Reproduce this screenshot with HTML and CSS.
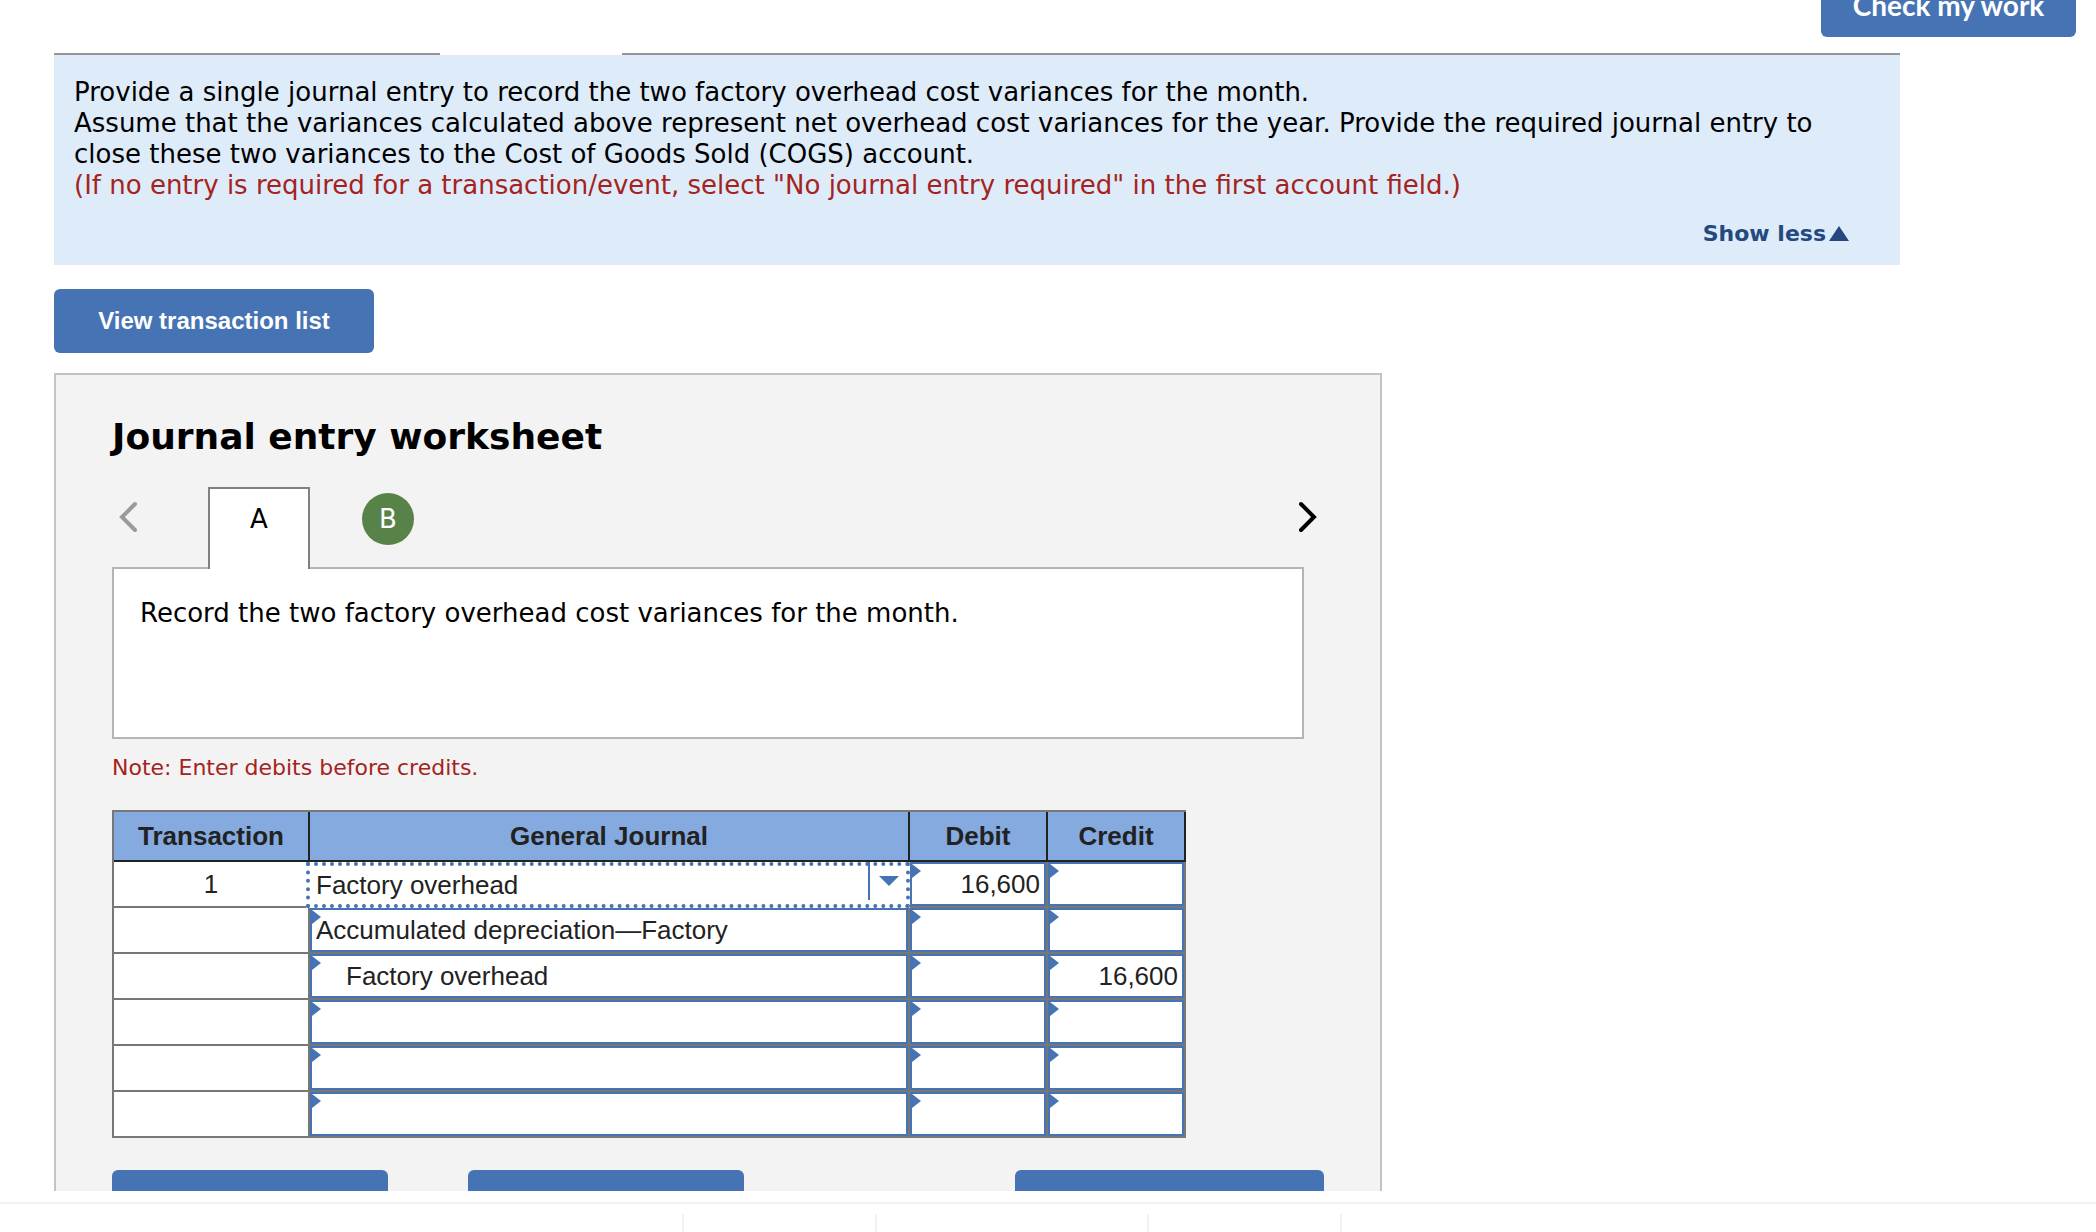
FILE: index.html
```html
<!DOCTYPE html>
<html lang="en">
<head>
<meta charset="utf-8">
<title>Journal entry worksheet</title>
<link rel="stylesheet" href="styles.css">
</head>
<body>
<main class="content">
  <div class="toolbar"><button type="button" class="btn btn-check">Check my work</button></div>

  <div class="tab-rule"><span></span><span></span></div>
  <section class="instructions">
    <p>Provide a single journal entry to record the two factory overhead cost variances for the month.<br>
    Assume that the variances calculated above represent net overhead cost variances for the year. Provide the required journal entry to close these two variances to the Cost of Goods Sold (COGS) account.<br>
    <span class="hint">(If no entry is required for a transaction/event, select "No journal entry required" in the first account field.)</span></p>
    <a class="show-less" href="#">Show less<svg width="20" height="15" viewBox="0 0 20 15" aria-hidden="true"><path d="M10 0L20 15H0z" fill="currentColor"/></svg></a>
  </section>

  <button type="button" class="btn btn-list">View transaction list</button>

  <section class="worksheet">
    <h1>Journal entry worksheet</h1>
    <nav class="steps">
      <button type="button" class="arrow arrow-prev" aria-label="Previous"><svg width="18" height="32" viewBox="0 0 18 32" aria-hidden="true"><path d="M16 3L3 16L16 29" fill="none" stroke="currentColor" stroke-width="4" stroke-linecap="round"/></svg></button>
      <button type="button" class="step step-current">A</button>
      <button type="button" class="step step-done">B</button>
      <button type="button" class="arrow arrow-next" aria-label="Next"><svg width="18" height="32" viewBox="0 0 18 32" aria-hidden="true"><path d="M2 3L15 16L2 29" fill="none" stroke="currentColor" stroke-width="4" stroke-linecap="round"/></svg></button>
    </nav>
    <div class="description">Record the two factory overhead cost variances for the month.</div>
    <p class="note">Note: Enter debits before credits.</p>

    <table class="journal">
      <colgroup><col class="col-transaction"><col class="col-account"><col class="col-amount"><col class="col-amount"></colgroup>
      <thead>
        <tr><th scope="col">Transaction</th><th scope="col">General Journal</th><th scope="col">Debit</th><th scope="col">Credit</th></tr>
      </thead>
      <tbody>
        <tr>
          <td>1</td>
          <td class="entry"><div class="picker"><select aria-label="Account, line 1"><option>Factory overhead</option></select><span class="picker-arrow"></span></div></td>
          <td class="entry amount"><input type="text" aria-label="Debit, line 1" value="16,600"></td>
          <td class="entry amount"><input type="text" aria-label="Credit, line 1"></td>
        </tr>
        <tr>
          <td></td>
          <td class="entry"><input type="text" aria-label="Account, line 2" value="Accumulated depreciation—Factory"></td>
          <td class="entry amount"><input type="text" aria-label="Debit, line 2"></td>
          <td class="entry amount"><input type="text" aria-label="Credit, line 2"></td>
        </tr>
        <tr>
          <td></td>
          <td class="entry"><input type="text" class="indented" aria-label="Account, line 3" value="Factory overhead"></td>
          <td class="entry amount"><input type="text" aria-label="Debit, line 3"></td>
          <td class="entry amount"><input type="text" aria-label="Credit, line 3" value="16,600"></td>
        </tr>
        <tr>
          <td></td>
          <td class="entry"><input type="text" aria-label="Account, line 4"></td>
          <td class="entry amount"><input type="text" aria-label="Debit, line 4"></td>
          <td class="entry amount"><input type="text" aria-label="Credit, line 4"></td>
        </tr>
        <tr>
          <td></td>
          <td class="entry"><input type="text" aria-label="Account, line 5"></td>
          <td class="entry amount"><input type="text" aria-label="Debit, line 5"></td>
          <td class="entry amount"><input type="text" aria-label="Credit, line 5"></td>
        </tr>
        <tr>
          <td></td>
          <td class="entry"><input type="text" aria-label="Account, line 6"></td>
          <td class="entry amount"><input type="text" aria-label="Debit, line 6"></td>
          <td class="entry amount"><input type="text" aria-label="Credit, line 6"></td>
        </tr>
      </tbody>
    </table>

    <div class="actions">
      <button type="button" class="btn btn-record" aria-label="Record entry"></button>
      <button type="button" class="btn btn-clear" aria-label="Clear entry"></button>
      <button type="button" class="btn btn-view" aria-label="View general journal"></button>
    </div>
  </section>
</main>
<footer class="pager"><div></div><div></div><div></div><div></div><div></div></footer>
</body>
</html>
```
FILE: styles.css
```css
* { box-sizing: border-box; }

body {
  margin: 0;
  height: 100vh;
  display: flex;
  flex-direction: column;
  overflow: hidden;
  background: #fff;
  color: #000;
  font: 26px/31px Verdana, "DejaVu Sans", sans-serif;
}

p, h1 { margin: 0; }
button, input, select { font: inherit; color: inherit; margin: 0; }

.content {
  flex: 1;
  min-height: 0;
  overflow: hidden;
  padding: 0 196px 0 54px;
}

.btn {
  height: 64px;
  border: 0;
  border-radius: 6px;
  background: #4673b3;
  color: #fff;
  font: bold 24px/28px Arial, "Liberation Sans", sans-serif;
}

/* The toolbar is scrolled partly out of view. */
.toolbar {
  height: 37px;
  margin-right: -176px;
  display: flex;
  align-items: flex-end;
  justify-content: flex-end;
}
.btn-check { width: 255px; flex: none; font: bold 28px/28px Lato, sans-serif; }

.tab-rule {
  display: grid;
  grid-template-columns: 386px 1fr;
  column-gap: 182px;
  margin-top: 16px;
  height: 2px;
}
.tab-rule span { background: #959699; }

.instructions {
  display: flex;
  flex-direction: column;
  background: #deebf9;
  padding: 22px 51px 16px 20px;
}
.hint, .note { color: #a5231e; }
.show-less {
  align-self: flex-end;
  display: flex;
  align-items: baseline;
  gap: 3px;
  margin-top: 17px;
  color: #25487f;
  font-size: 22px;
  font-weight: bold;
  text-decoration: none;
}

.btn-list { display: block; width: 320px; margin: 24px 0 20px; }

.worksheet {
  max-width: 1328px;
  padding: 44px 76px 40px 56px;
  border: 2px solid #c3c3c3;
  background: #f3f3f3;
}
h1 { font-size: 36px; line-height: 36px; }

.steps {
  display: flex;
  align-items: flex-start;
  height: 80px;
  margin-top: 32px;
}
.step, .arrow { padding: 0; border: 0; background: none; flex: none; }
.arrow { display: flex; margin-top: 14px; }
.arrow-prev { margin-left: 7px; color: #9a9a9a; }
.arrow-next { margin: 14px -13px 0 auto; color: #000; }
.step { font-size: 26px; line-height: 32px; }
.step-current {
  width: 102px;
  height: 82px;
  margin-left: 71px;
  padding-bottom: 20px;
  border: 2px solid #808080;
  border-bottom: 0;
  background: #fff;
  position: relative;
}
.step-done {
  width: 52px;
  height: 52px;
  margin: 6px 0 0 52px;
  border-radius: 50%;
  background: #588348;
  color: #fff;
}

.description {
  min-height: 172px;
  padding: 29px 26px;
  border: 2px solid #b5b5b5;
  background: #fff;
}
.note { margin-top: 13px; font-size: 22px; }

.journal {
  width: 1074px;
  margin-top: 27px;
  table-layout: fixed;
  border-collapse: separate;
  border-spacing: 0;
  border: solid #777;
  border-width: 2px 0 0 2px;
  background: #fff;
  color: #222;
  font: 26px/30px Arial, "Liberation Sans", sans-serif;
}
.col-transaction { width: 196px; }
.col-account { width: 600px; }
.col-amount { width: 138px; }
.journal th {
  height: 50px;
  padding: 0;
  border: solid #222;
  border-width: 0 2px 2px 0;
  background: #84aae0;
}
.journal td {
  position: relative;
  height: 46px;
  padding: 0;
  border: solid #777;
  border-width: 0 2px 2px 0;
  text-align: center;
}
.entry input {
  display: block;
  width: 100%;
  height: 44px;
  padding: 0 4px;
  border: 2px solid #4673b3;
  border-radius: 0;
  background: #fff;
}
.entry .indented { padding-left: 34px; }
.amount input { text-align: right; }
.entry::after {
  content: "";
  position: absolute;
  left: 2px;
  top: 2px;
  width: 9px;
  height: 14px;
  background: #4673b3;
  clip-path: polygon(0 0, 100% 50%, 0 100%);
}

/* The active cell lies over the grid lines round it. */
.picker {
  position: absolute;
  z-index: 1;
  inset: 0 -2px -2px -4px;
  border: 4px dotted #4673b3;
  background: #fff;
}
.picker select {
  appearance: none;
  display: block;
  width: 100%;
  height: 38px;
  padding: 0 44px 0 6px;
  border: 0;
  background: none;
}
.picker-arrow {
  position: absolute;
  top: -4px;
  right: 0;
  width: 38px;
  height: 38px;
  border-left: 2px solid #4673b3;
  pointer-events: none;
}
.picker-arrow::after {
  content: "";
  position: absolute;
  left: 9px;
  top: 14px;
  width: 20px;
  height: 10px;
  background: #4673b3;
  clip-path: polygon(0 0, 100% 0, 50% 100%);
}
.entry:has(.picker)::after { display: none; }

.actions { display: flex; margin: 32px -20px 0 0; }
.btn-record, .btn-clear { width: 276px; }
.btn-clear { margin-left: 80px; }
.btn-view { width: 309px; margin-left: auto; }

.pager {
  flex: none;
  display: grid;
  grid-template-columns: 684px 193px 272px 193px 1fr;
  margin-top: 11px;
  padding-top: 10px;
  border-top: 2px solid #f2f2f2;
}
.pager div { height: 18px; border-right: 2px solid #f2f2f2; }
.pager div:last-child { border: 0; }
```
